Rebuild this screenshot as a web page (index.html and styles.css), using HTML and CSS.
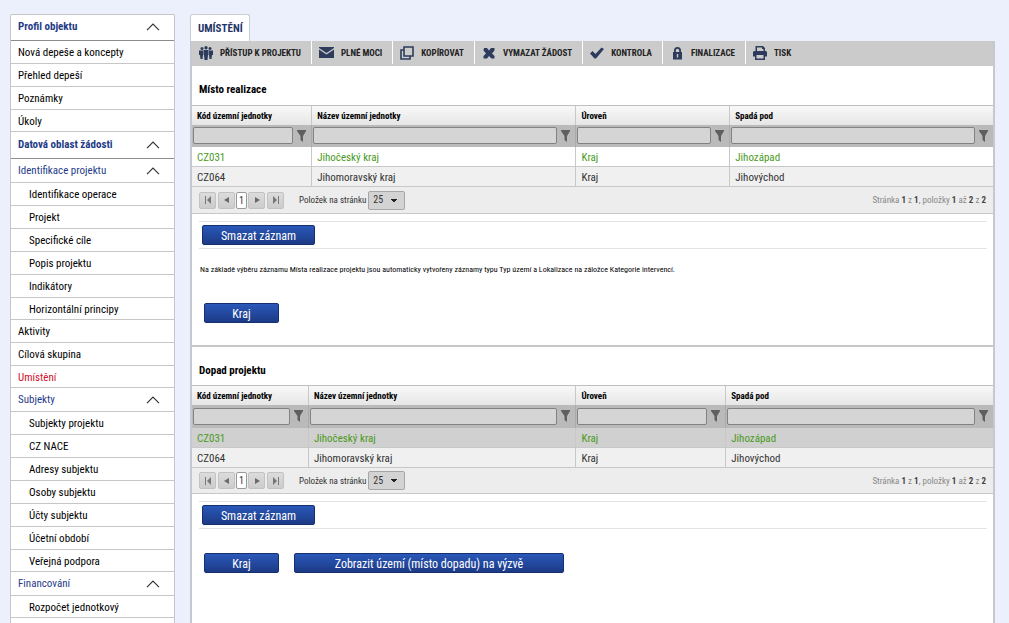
FILE: index.html
```html
<!DOCTYPE html>
<html lang="cs">
<head>
<meta charset="utf-8">
<title>Umístění</title>
<link rel="stylesheet" href="styles.css">
</head>
<body>
<svg class="sprite" aria-hidden="true">
  <symbol id="chevron" viewBox="0 0 14 8"><path d="M1 7.200 7 1l6 6.200" fill="none" stroke="#333" stroke-width="1.200"/></symbol>
  <symbol id="funnel" viewBox="0 0 9 12"><path d="M0 0h9v1L6 6v6L3.500 10V6L0 1z" fill="#5f5f5f"/></symbol>
  <symbol id="first" viewBox="0 0 8 8"><path d="M1 0h1v8H1zM7 0v8L3 4z" fill="#777"/></symbol>
  <symbol id="prev" viewBox="0 0 8 8"><path d="M6 1v6L1 4z" fill="#6a6a6a"/></symbol>
  <symbol id="next" viewBox="0 0 8 8"><path d="M2 1v6l5-3z" fill="#6a6a6a"/></symbol>
  <symbol id="last" viewBox="0 0 8 8"><path d="M6 0h1v8H6zM1 0v8l4-4z" fill="#777"/></symbol>
</svg>
<div class="page">
  <nav class="sidebar" aria-label="Menu">
    <button class="section">Profil objektu<svg><use href="#chevron"/></svg></button>
    <ul>
      <li><a href="#">Nová depeše a koncepty</a></li>
      <li><a href="#">Přehled depeší</a></li>
      <li><a href="#">Poznámky</a></li>
      <li><a href="#">Úkoly</a></li>
    </ul>
    <button class="section">Datová oblast žádosti<svg><use href="#chevron"/></svg></button>
    <button class="section sub">Identifikace projektu<svg><use href="#chevron"/></svg></button>
    <ul class="nested">
      <li><a href="#">Identifikace operace</a></li>
      <li><a href="#">Projekt</a></li>
      <li><a href="#">Specifické cíle</a></li>
      <li><a href="#">Popis projektu</a></li>
      <li><a href="#">Indikátory</a></li>
      <li><a href="#">Horizontální principy</a></li>
    </ul>
    <ul>
      <li><a href="#">Aktivity</a></li>
      <li><a href="#">Cílová skupina</a></li>
      <li><a href="#" class="active">Umístění</a></li>
    </ul>
    <button class="section sub">Subjekty<svg><use href="#chevron"/></svg></button>
    <ul class="nested">
      <li><a href="#">Subjekty projektu</a></li>
      <li><a href="#">CZ NACE</a></li>
      <li><a href="#">Adresy subjektu</a></li>
      <li><a href="#">Osoby subjektu</a></li>
      <li><a href="#">Účty subjektu</a></li>
      <li><a href="#">Účetní období</a></li>
      <li><a href="#">Veřejná podpora</a></li>
    </ul>
    <button class="section sub">Financování<svg><use href="#chevron"/></svg></button>
    <ul class="nested">
      <li><a href="#">Rozpočet jednotkový</a></li>
    </ul>
  </nav>

  <main class="main">
    <button class="tab">UMÍSTĚNÍ</button>
    <div class="content">
      <div class="toolbar">
        <button><svg viewBox="0 0 14 14"><circle cx="3" cy="2.500" r="1.500"/><circle cx="7" cy="1.800" r="1.700"/><circle cx="11" cy="2.500" r="1.500"/><path d="M0 4.500h4V9l-.5 4h-2L1 9H0zM4.500 4h5v5H9l-.5 5h-3L5 9h-.5zM10 4.500h4V9h-1l-.5 4h-2L10 9z"/></svg>PŘÍSTUP K PROJEKTU</button>
        <button><svg class="mail" viewBox="0 0 15 11"><path d="M0 0h15v1L7.500 6 0 1zM0 2.500l7.500 5 7.500-5V11H0z"/></svg>PLNÉ MOCI</button>
        <button><svg viewBox="0 0 14 14"><path d="M4 1h9v9H4zM4 4H1v9h9v-3" fill="none" stroke="#2d3c5c" stroke-width="1.600"/></svg>KOPÍROVAT</button>
        <button><svg viewBox="0 0 14 14"><path d="M2 2h3l2 2.500L9 2h3.500v2.500L10 7.500l2.500 2.500v2.500H9.500L7 10l-2 2.500H1.500V10L4 7.500l-2.500-3z"/></svg>VYMAZAT ŽÁDOST</button>
        <button><svg viewBox="0 0 14 14"><path d="M0 7.500 2.500 5 5.500 8l6-6.500L14 3 6 12.500H4.500z"/></svg>KONTROLA</button>
        <button><svg viewBox="0 0 14 14"><path fill-rule="evenodd" d="M4 6V4.500a3.500 3.500 0 0 1 7 0V6h1v7.500H3V6zm1.800 0h3.400V4.500a1.700 1.700 0 0 0-3.400 0zM6.800 8v3.500h1.400V8z"/></svg>FINALIZACE</button>
        <button><svg viewBox="0 0 14 14"><path fill-rule="evenodd" d="M2.500 0h7.500l2 2v3h1l1 1v4.500h-2V14H2v-3.500H0V6l1-1h1.500zM4 1.500V5h6.500V3H9V1.500zM3.500 9v3.500h7V9z"/></svg>TISK</button>
      </div>

      <section class="panel">
        <h2>Místo realizace</h2>
        <table class="grid">
          <colgroup><col class="c-code"><col class="c-name"><col class="c-level"><col></colgroup>
          <thead>
            <tr class="head"><th>Kód územní jednotky</th><th>Název územní jednotky</th><th>Úroveň</th><th>Spadá pod</th></tr>
            <tr class="filters">
              <td><div><input aria-label="Filtr kód"><svg><use href="#funnel"/></svg></div></td>
              <td><div><input aria-label="Filtr název"><svg><use href="#funnel"/></svg></div></td>
              <td><div><input aria-label="Filtr úroveň"><svg><use href="#funnel"/></svg></div></td>
              <td><div><input aria-label="Filtr spadá pod"><svg><use href="#funnel"/></svg></div></td>
            </tr>
          </thead>
          <tbody>
            <tr class="current"><td>CZ031</td><td>Jihočeský kraj</td><td>Kraj</td><td>Jihozápad</td></tr>
            <tr class="alt"><td>CZ064</td><td>Jihomoravský kraj</td><td>Kraj</td><td>Jihovýchod</td></tr>
          </tbody>
        </table>
        <div class="pager">
          <button aria-label="První"><svg><use href="#first"/></svg></button>
          <button aria-label="Předchozí"><svg><use href="#prev"/></svg></button>
          <button class="num">1</button>
          <button aria-label="Další"><svg><use href="#next"/></svg></button>
          <button aria-label="Poslední"><svg><use href="#last"/></svg></button>
          <label for="size1">Položek na stránku</label>
          <select id="size1"><option>25</option></select>
          <span class="info">Stránka <b>1</b> z <b>1</b>, položky <b>1</b> až <b>2</b> z <b>2</b></span>
        </div>
        <div class="record"><button class="btn medium">Smazat záznam</button></div>
        <p class="note">Na základě výběru záznamu Místa realizace projektu jsou automaticky vytvořeny záznamy typu Typ území a Lokalizace na záložce Kategorie intervencí.</p>
        <div class="actions"><button class="btn small">Kraj</button></div>
      </section>

      <section class="panel impact">
        <h2>Dopad projektu</h2>
        <table class="grid">
          <colgroup><col class="c-code"><col class="c-name"><col class="c-level"><col></colgroup>
          <thead>
            <tr class="head"><th>Kód územní jednotky</th><th>Název územní jednotky</th><th>Úroveň</th><th>Spadá pod</th></tr>
            <tr class="filters">
              <td><div><input aria-label="Filtr kód"><svg><use href="#funnel"/></svg></div></td>
              <td><div><input aria-label="Filtr název"><svg><use href="#funnel"/></svg></div></td>
              <td><div><input aria-label="Filtr úroveň"><svg><use href="#funnel"/></svg></div></td>
              <td><div><input aria-label="Filtr spadá pod"><svg><use href="#funnel"/></svg></div></td>
            </tr>
          </thead>
          <tbody>
            <tr class="current hover"><td>CZ031</td><td>Jihočeský kraj</td><td>Kraj</td><td>Jihozápad</td></tr>
            <tr class="alt"><td>CZ064</td><td>Jihomoravský kraj</td><td>Kraj</td><td>Jihovýchod</td></tr>
          </tbody>
        </table>
        <div class="pager">
          <button aria-label="První"><svg><use href="#first"/></svg></button>
          <button aria-label="Předchozí"><svg><use href="#prev"/></svg></button>
          <button class="num">1</button>
          <button aria-label="Další"><svg><use href="#next"/></svg></button>
          <button aria-label="Poslední"><svg><use href="#last"/></svg></button>
          <label for="size2">Položek na stránku</label>
          <select id="size2"><option>25</option></select>
          <span class="info">Stránka <b>1</b> z <b>1</b>, položky <b>1</b> až <b>2</b> z <b>2</b></span>
        </div>
        <div class="record"><button class="btn medium">Smazat záznam</button></div>
        <div class="actions"><button class="btn small">Kraj</button><button class="btn large">Zobrazit území (místo dopadu) na výzvě</button></div>
      </section>
    </div>
  </main>
</div>
</body>
</html>
```
FILE: styles.css
```css
* { box-sizing: border-box; }
body {
  margin: 0;
  background: #ecf0fc;
  color: #000;
  font: 11px/16px "Roboto Condensed", "Liberation Sans Narrow", Roboto, sans-serif;
}
button, input, select { font: inherit; color: inherit; margin: 0; }
button { padding: 0; border: 0; background: none; }
.sprite { display: none; }
.page {
  display: flex;
  align-items: stretch;
  gap: 15px;
  min-height: 100vh;
  padding: 14px 14px 0 10px;
}

/* Side menu */
.sidebar {
  flex: 0 0 165px;
  background: #fff;
  border: 1px solid #c4c6ca;
  border-bottom: 0;
  border-radius: 2px 2px 0 0;
}
.sidebar ul { list-style: none; margin: 0; padding: 0; }
.sidebar a {
  display: block;
  height: 23px;
  padding: 0 7px;
  border-bottom: 1px solid #c6c6c6;
  line-height: 24px;
  color: #000;
  text-decoration: none;
}
.sidebar li:last-child a { height: 22px; }
.sidebar .nested a { padding-left: 18px; }
.sidebar .active { color: #d0102c; }
.section {
  display: flex;
  align-items: center;
  justify-content: space-between;
  width: 100%;
  height: 27px;
  padding: 0 14px 1px 7px;
  border-bottom: 1px solid #8c8c8c;
  color: #1f3c88;
  font-weight: bold;
}
.section:first-child { height: 26px; }
.section.sub { height: 24px; padding-bottom: 0; border-color: #c6c6c6; font-weight: normal; }
.section svg { width: 14px; height: 8px; }

/* Main area */
.main { flex: 1; display: flex; flex-direction: column; min-width: 0; }
.tab {
  align-self: flex-start;
  height: 27px;
  padding: 1px 6px 0 7px;
  border: 1px solid #c8ccd4;
  border-bottom: 0;
  border-radius: 3px 3px 0 0;
  background: #fff;
  color: #1f3567;
  font-weight: bold;
}
.content {
  flex: 1;
  background: #fff;
  border: solid #c5c8ce;
  border-width: 0 2px;
}
.toolbar { display: flex; height: 25px; background: #cbcbcb; }
.toolbar button {
  display: flex;
  align-items: center;
  gap: 7px;
  height: 23px;
  padding: 0 10px 0 7px;
  border-right: 1px solid #fff;
  color: #222;
  font-size: 9px;
  font-weight: bold;
}
.toolbar button:last-child { border: 0; }
.toolbar svg { width: 14px; height: 14px; fill: #2d3c5c; }
.toolbar .mail { width: 15px; height: 11px; }

.panel h2 {
  margin: 0;
  padding: 16px 7px 7px;
  font-size: 11px;
  line-height: 16px;
}
.impact { margin-top: 22px; border-top: 2px solid #c8c8c8; }
.impact h2 { padding-bottom: 6px; }

/* Data grid */
.grid { width: 100%; table-layout: fixed; border-collapse: separate; border-spacing: 0; }
.c-code { width: 15%; }
.c-name { width: 33%; }
.c-level { width: 19.2%; }
.impact .c-code { width: 14.6%; }
.impact .c-name { width: 33.4%; }
.impact .c-level { width: 18.7%; }
.grid th, .grid td {
  height: 20px;
  padding: 0 5px;
  border-right: 1px solid #c8c8c8;
  text-align: left;
  line-height: 16px;
}
.grid th:last-child, .grid td:last-child { border-right: 0; }
.grid th {
  border-top: 1px solid #bfbfbf;
  background: linear-gradient(#f8f8f8, #e6e6e6);
  font-size: 9px;
}
.grid .filters td { height: 22px; padding: 0 5px 1px 1px; border-color: #ababab; background: #bababa; }
.impact .filters td { height: 23px; }
.filters div { display: flex; align-items: center; gap: 4px; }
.filters input {
  flex: 1;
  min-width: 0;
  height: 17px;
  padding: 0 4px;
  border: 1px solid #828282;
  border-radius: 2px;
  background: #d5d5d5;
}
.filters svg { width: 9px; height: 12px; }
tbody tr { color: #333; }
.grid tbody td { padding-top: 2px; border-bottom: 1px solid #c8c8c8; }
tbody .current { color: #4a9a1c; }
.alt { background: #f0f0f0; }
.hover { background: #d0d0d0; }

.pager {
  display: flex;
  align-items: center;
  height: 27px;
  padding: 0 7px;
  border-bottom: 1px solid #c8c8c8;
  background: #ededed;
  color: #333;
  font-size: 9px;
}
.impact .pager { height: 26px; }
.pager button {
  display: grid;
  place-items: center;
  width: 17px;
  height: 17px;
  margin-right: 2px;
  border: 1px solid #c2c2c2;
  border-radius: 2px;
  background: linear-gradient(#dcdcdc, #cccccc);
}
.pager .num { width: 11px; margin: 0 1px 0 -1px; border-color: #999; background: #fff; font-size: 10px; }
.pager button svg { width: 8px; height: 8px; }
.pager label { margin-left: 13px; }
.pager select {
  appearance: none;
  width: 37px;
  height: 19px;
  margin-left: 2px;
  padding: 0 4px;
  border: 1px solid #a6a6a6;
  border-radius: 2px;
  background: linear-gradient(to top right, transparent 50%, #222 50%) 22px 7px / 3px 4px no-repeat, linear-gradient(to top left, transparent 50%, #222 50%) 25px 7px / 3px 4px no-repeat, #d3d3d3;
  font-size: 10px;
}
.info { margin-left: auto; color: #888; }
.info b { color: #444; }

/* Actions */
.record {
  display: flex;
  align-items: center;
  height: 28px;
  margin: 7px 6px 0 7px;
  padding: 0 3px;
  border: solid #e3e3e3;
  border-width: 1px 0;
}
.btn {
  height: 20px;
  padding-top: 1px;
  border: 1px solid #14306f;
  border-radius: 2px;
  background: linear-gradient(#2a58b8, #1c3a86);
  color: #fff;
  font-size: 12px;
  line-height: 18px;
}
.small { width: 75px; }
.medium { width: 113px; }
.large { width: 270px; }
.note { margin: 13px 8px 0; font-size: 8px; line-height: 16px; }
.actions { display: flex; gap: 15px; padding: 25px 12px 0; }
.impact .actions { padding-top: 24px; }
```
